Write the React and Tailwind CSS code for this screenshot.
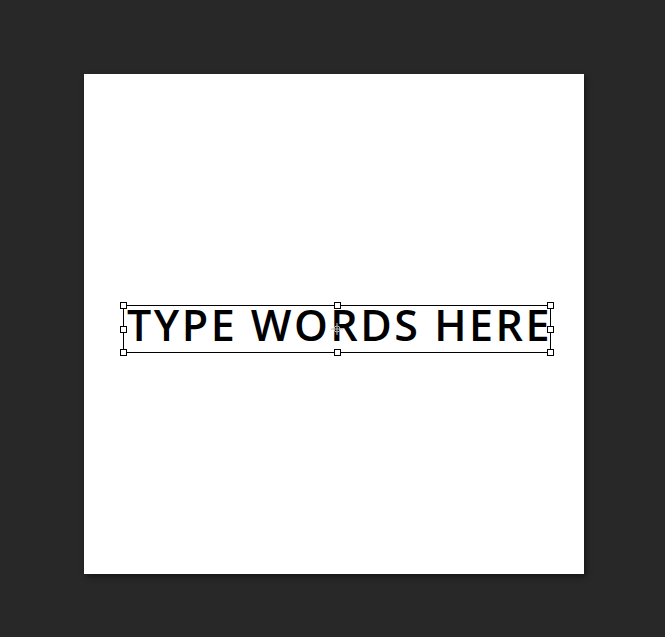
export default function App() {
  const handles = [
    "left-[-4px] top-[-4px]",
    "left-[210px] top-[-4px]",
    "right-[-4px] top-[-4px]",
    "left-[-4px] top-[20px]",
    "right-[-4px] top-[20px]",
    "left-[-4px] bottom-[-4px]",
    "left-[210px] bottom-[-4px]",
    "right-[-4px] bottom-[-4px]",
  ];
  return (
    <div className="w-[665px] h-[637px] bg-[#282828] pl-[84px] pt-[74px]">
      <div className="w-[500px] h-[500px] bg-white shadow-[2px_3px_6px_rgba(0,0,0,0.45)] pt-[231px] pl-[39px]">
        <div className="relative w-[428px] h-[48px] border border-black">
          <div className="absolute left-[3px] top-[-3px] whitespace-nowrap text-black text-[43px] leading-none font-semibold tracking-[2.5px] font-['Open_Sans',sans-serif]">
            TYPE WORDS HERE
          </div>
          {handles.map((h) => (
            <div key={h} className={`absolute ${h} w-[7px] h-[7px] border border-black bg-white`} />
          ))}
          {/* reference point */}
          <svg className="absolute left-[207px] top-[17px]" width="12" height="12" viewBox="0 0 12 12">
            <circle cx="6" cy="6" r="3" fill="none" stroke="#bbb" strokeWidth="1" />
            <path d="M0 6h12M6 0v12" stroke="#bbb" strokeWidth="1" />
          </svg>
        </div>
      </div>
    </div>
  );
}
